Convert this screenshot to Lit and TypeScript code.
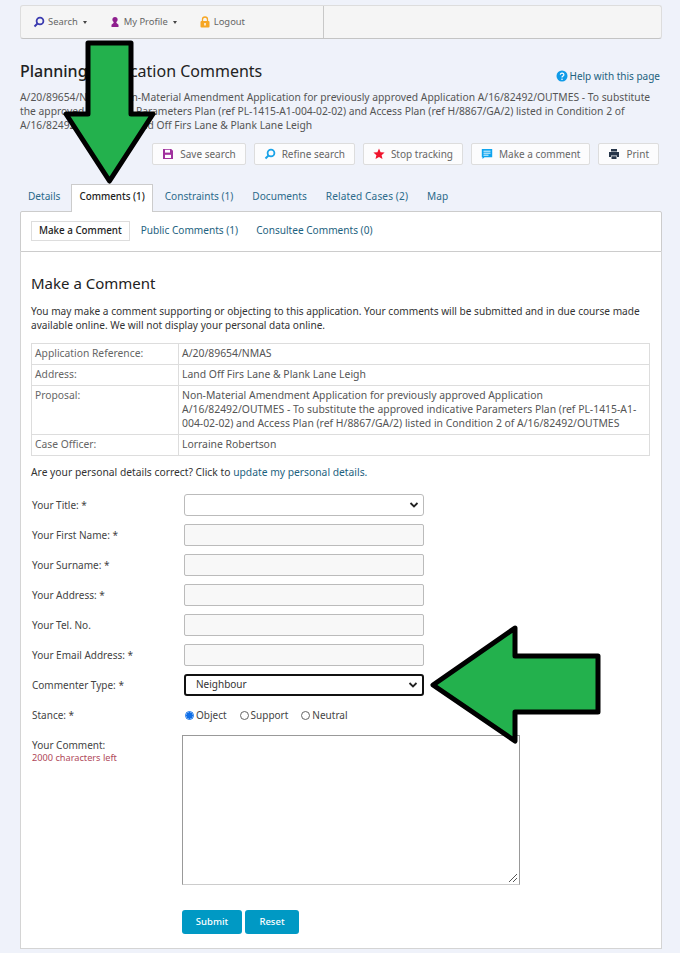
import { LitElement, html, css, svg } from "lit";
import { customElement } from "lit/decorators.js";

const field = (label: string) => html`<div class="row"><label>${label}</label><input class="inp" /></div>`;

@customElement("app-root")
export class AppRoot extends LitElement {
  static styles = css`
    :host { display: block; position: relative; height: 953px; overflow: hidden; background: #eff2fa; font: 10.3px/14px "Noto Sans", sans-serif; color: #444; }
    * { box-sizing: border-box; }
    a { color: #1d6280; text-decoration: none; }
    .page { padding: 5px 18px 0 20px; }
    .nav { height: 34px; display: flex; background: #f5f5f5; border: 1px solid #ddd; border-bottom: 1px solid #c4c4c4; border-radius: 3px; }
    .nav-left { width: 303px; border-right: 1px solid #c8c8c8; display: flex; align-items: center; padding-left: 12px; gap: 22px; color: #666; font-size: 9.4px; }
    .nav-left span { display: flex; align-items: center; gap: 3px; }
    .caret { width: 0; height: 0; border: 2.5px solid transparent; border-top: 3px solid #444; border-bottom: 0; margin-left: 2px; }
    .head { display: flex; justify-content: space-between; align-items: flex-end; margin-top: 22px; height: 20px; }
    h1 { font-size: 16px; line-height: 20px; font-weight: 400; color: #222; margin: 0; }
    h1 b { font-weight: 500; }
    .help { display: flex; align-items: center; gap: 1px; padding-right: 2px; margin-bottom: -2px; font-size: 10px; }
    .desc { margin: 9px 0 0; color: #555; width: 642px; }
    .actions { display: flex; justify-content: flex-end; gap: 8px; margin-top: 11px; padding-right: 3px; height: 22px; }
    .btn { display: flex; align-items: center; gap: 6px; padding: 0 9px; background: #fcfcfd; border: 1px solid #ddd; border-radius: 2px; color: #666; font-size: 10px; }
    .tabs { display: flex; margin-top: 18px; height: 28px; position: relative; align-items: flex-end; font-size: 10.1px; }
    .tab { padding: 0 8px 4px; height: 27px; display: flex; align-items: center; color: #2b6a8a; margin-right: 3px; }
    .tab.wide { letter-spacing: 0.12px; }
    .tab.on { background: #fff; border: 1px solid #ccc; border-bottom: 0; height: 28px; color: #222; font-weight: 500; margin: 0 4px 0 0; position: relative; top: 1px; padding: 0 7px 3px; z-index: 1; font-size: 9.8px; }
    .sub { height: 41px; background: #fff; border: 1px solid #ccc; border-radius: 2px 2px 0 0; display: flex; align-items: center; padding: 0 10px 2px; gap: 11px; font-size: 10.1px; }
    .sub .on { border: 1px solid #ddd; padding: 2px 7px; color: #222; font-weight: 500; height: 20px; font-size: 9.8px; }
    .sub a { margin-top: -1px; margin-right: 7px; }
    .main { height: 697px; background: #fff; border: 1px solid #d4d4d4; border-top: 0; padding: 21px 10px 0; }
    h2 { font-size: 15px; line-height: 20px; font-weight: 400; color: #222; margin: 0; }
    .intro { margin: 11px 0 0; color: #333; font-size: 10.1px; }
    table { border-collapse: collapse; width: 619px; margin-top: 11px; }
    td { border: 1px solid #ddd; padding: 2px 5px 4px 3px; vertical-align: top; color: #555; font-size: 10.4px; }
    td:first-child { width: 147px; color: #666; font-size: 10.3px; }
    .q { margin: 9px 0 0; color: #333; height: 25px; }
    .row { display: flex; align-items: center; height: 30px; padding-left: 1px; font-size: 10px; }
    .row label { width: 152px; color: #444; }
    .inp { width: 240px; height: 22px; background: #f8f8f8; border: 1px solid #bbb; border-radius: 2px; }
    .sel { width: 240px; height: 22px; background: #fff; border: 1px solid #bbb; border-radius: 3px; display: flex; align-items: center; justify-content: space-between; padding: 0 4px 0 11px; color: #333; }
    .sel.focus { border: 2px solid #111; padding-left: 10px; }
    .sel.focus span { margin-top: -2px; }
    .radios { display: flex; gap: 13px; color: #444; padding-left: 1px; }
    .radios span { display: flex; align-items: center; gap: 2px; }
    .r { width: 9px; height: 9px; border: 1px solid #666; border-radius: 50%; display: inline-block; background: #fff; }
    .r.on { border: 1px solid #0f6fe8; background: radial-gradient(circle, #0f6fe8 0 3px, #fff 3.3px); }
    .cmt { display: flex; margin-top: 5px; padding-left: 1px; font-size: 10px; }
    .cmt label { width: 150px; padding-top: 3px; }
    .cmt small { display: block; color: #b0485a; font-size: 9.2px; line-height: 12px; }
    .ta { width: 338px; height: 150px; border: 1px solid #999; border-bottom: 1px solid #ccc; position: relative; }
    .grip { position: absolute; right: 1px; bottom: 1px; }
    .form-btns { display: flex; gap: 3px; margin: 25px 0 0 151px; }
    .sb { height: 24px; background: #0099c4; color: #fff; border-radius: 3px; display: flex; align-items: center; justify-content: center; font-size: 9.5px; font-weight: 500; }
    .sb.s { width: 60px; }
    .sb.t { width: 54px; }
    .overlay { position: absolute; inset: 0; pointer-events: none; z-index: 5; }
  `;

  render() {
    return html`
      <div class="page">
        <div class="nav">
          <div class="nav-left">
            <span><svg width="12" height="12" viewBox="0 0 12 12"><circle cx="7" cy="5" r="3.4" fill="none" stroke="#3b3bb0" stroke-width="1.8"/><path d="M4.5 7.5 1.5 10.5" stroke="#3b3bb0" stroke-width="2"/></svg>Search<i class="caret"></i></span>
            <span><svg width="12" height="12" viewBox="0 0 12 12"><circle cx="6" cy="3.5" r="2.6" fill="#8e1f8e"/><path d="M4.8 5.5h2.4l.3 1.6 2 1.6V11H2.5V8.7l2-1.6z" fill="#8e1f8e"/></svg>My Profile<i class="caret"></i></span>
            <span><svg width="12" height="12" viewBox="0 0 12 12"><rect x="1.5" y="5" width="9" height="6.5" rx="1" fill="#f6a623"/><path d="M3.5 5V3.5a2.5 2.5 0 0 1 5 0V5" fill="none" stroke="#f6a623" stroke-width="1.3"/><rect x="5.3" y="7" width="1.4" height="2.5" fill="#fff"/></svg>Logout</span>
          </div>
        </div>
        <div class="head">
          <h1><b>Planning</b> Application Comments</h1>
          <a class="help"><svg width="12" height="12" viewBox="0 0 12 12"><circle cx="6" cy="6" r="5.5" fill="#0f9be8"/><path d="M4.3 4.6a1.8 1.6 0 1 1 2.6 1.5c-.6.4-.9.6-.9 1.3" fill="none" stroke="#fff" stroke-width="1.2"/><circle cx="6" cy="9.2" r=".8" fill="#fff"/></svg>Help with this page</a>
        </div>
        <p class="desc">A/20/89654/NMAS - Non-Material Amendment Application for previously approved Application A/16/82492/OUTMES - To substitute the approved indicative Parameters Plan (ref PL-1415-A1-004-02-02) and Access Plan (ref H/8867/GA/2) listed in Condition 2 of A/16/82492/OUTMES - Land Off Firs Lane &amp; Plank Lane Leigh</p>
        <div class="actions">
          <div class="btn"><svg width="12" height="12" viewBox="0 0 12 12"><path fill="#a0329e" d="M1 1h8.2L11 2.8V11H1z"/><rect x="3" y="1.8" width="5" height="2.8" fill="#fff"/><rect x="3" y="6.8" width="6" height="3.2" fill="#fff"/></svg>Save search</div>
          <div class="btn"><svg width="12" height="12" viewBox="0 0 12 12"><circle cx="7" cy="5" r="3.4" fill="none" stroke="#1aa3e8" stroke-width="1.8"/><path d="M4.5 7.5 1.5 10.5" stroke="#1aa3e8" stroke-width="2"/></svg>Refine search</div>
          <div class="btn"><svg width="12" height="12" viewBox="0 0 12 12"><path fill="#f0142d" d="m6 .6 1.6 3.7 4 .3-3 2.600.9 3.900L6 9.100 2.500 11.100l.9-3.900-3-2.600 4-.3z"/></svg>Stop tracking</div>
          <div class="btn"><svg width="12" height="12" viewBox="0 0 12 12"><path fill="#0fa5ef" d="M.8 1h10.400v8.200H3.500L1.500 11V9.200H.8z"/><path d="M2.500 3.200h7M2.500 5.200h7M2.500 7.200h5" stroke="#fff" stroke-width=".9"/></svg>Make a comment</div>
          <div class="btn"><svg width="12" height="12" viewBox="0 0 12 12"><path fill="#27364a" d="M3 1h6v2.500H3zM1 4h10v5H9V7.500H3V9H1zM3.500 8.300h5V11h-5z"/></svg>Print</div>
        </div>
        <div class="tabs">
          <a class="tab">Details</a>
          <a class="tab on">Comments (1)</a>
          <a class="tab">Constraints (1)</a>
          <a class="tab">Documents</a>
          <a class="tab wide">Related Cases (2)</a>
          <a class="tab">Map</a>
        </div>
        <div class="sub">
          <span class="on">Make a Comment</span>
          <a>Public Comments (1)</a>
          <a>Consultee Comments (0)</a>
        </div>
        <div class="main">
          <h2>Make a Comment</h2>
          <p class="intro">You may make a comment supporting or objecting to this application. Your comments will be submitted and in due course made available online. We will not display your personal data online.</p>
          <table>
            <tr><td>Application Reference:</td><td>A/20/89654/NMAS</td></tr>
            <tr><td>Address:</td><td>Land Off Firs Lane &amp; Plank Lane Leigh</td></tr>
            <tr><td>Proposal:</td><td>Non-Material Amendment Application for previously approved Application A/16/82492/OUTMES - To substitute the approved indicative Parameters Plan (ref PL-1415-A1-004-02-02) and Access Plan (ref H/8867/GA/2) listed in Condition 2 of A/16/82492/OUTMES</td></tr>
            <tr><td>Case Officer:</td><td>Lorraine Robertson</td></tr>
          </table>
          <p class="q">Are your personal details correct? Click to <a>update my personal details.</a></p>
          <div class="row"><label>Your Title: *</label><div class="sel"><span></span>${this.chev()}</div></div>
          ${field("Your First Name: *")}
          ${field("Your Surname: *")}
          ${field("Your Address: *")}
          ${field("Your Tel. No.")}
          ${field("Your Email Address: *")}
          <div class="row"><label>Commenter Type: *</label><div class="sel focus"><span>Neighbour</span>${this.chev()}</div></div>
          <div class="row"><label>Stance: *</label><div class="radios">
            <span><i class="r on"></i>Object</span><span><i class="r"></i>Support</span><span><i class="r"></i>Neutral</span>
          </div></div>
          <div class="cmt">
            <label>Your Comment:<small>2000 characters left</small></label>
            <div class="ta"><svg class="grip" width="10" height="10" viewBox="0 0 10 10"><path d="M9 1 1 9M9 5 5 9" stroke="#555" stroke-width="1"/></svg></div>
          </div>
          <div class="form-btns">
            <div class="sb s">Submit</div>
            <div class="sb t">Reset</div>
          </div>
        </div>
      </div>
      <svg class="overlay" width="680" height="953" viewBox="0 0 680 953">
        ${svg`<polygon points="88,43 131,43 131,114 153,114 109.500,181 66,114 88,114" fill="#23b14d" stroke="#000" stroke-width="5" stroke-linejoin="round"/>
        <polygon points="598,656 515,656 515,628 433,685 515,741 515,712 598,712" fill="#23b14d" stroke="#000" stroke-width="5" stroke-linejoin="round"/>`}
      </svg>
    `;
  }

  chev() {
    return html`<svg width="10" height="8" viewBox="0 0 10 8"><path d="M1.500 2 5 5.500 8.500 2" fill="none" stroke="#222" stroke-width="1.800"/></svg>`;
  }
}
